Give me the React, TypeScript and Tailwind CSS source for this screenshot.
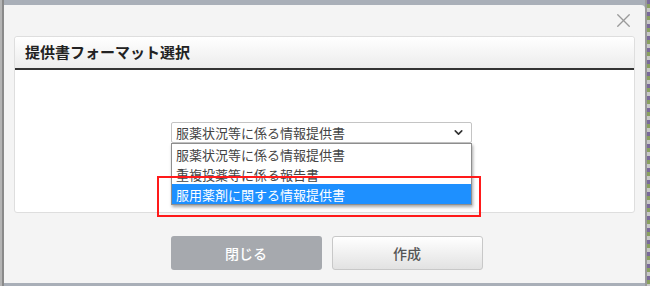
import { ChevronDown, X } from 'lucide-react';

const font = { fontFamily: '"Noto Sans CJK JP", "Noto Sans", sans-serif' };

const options = ['服薬状況等に係る情報提供書', '重複投薬等に係る報告書', '服用薬剤に関する情報提供書'];

function FormatSelect() {
  return (
    <div className="relative w-[301px]">
      <div className="h-[21px] flex items-center justify-between pl-[4px] pr-[6px] bg-white border border-[#c4c4c4] rounded-[2px] text-[13px] text-[#444] leading-none">
        <span>{options[0]}</span>
        <ChevronDown size={13} strokeWidth={3} className="text-[#333]" />
      </div>
      {/* open list */}
      <div className="absolute left-0 top-[21px] w-[301px] bg-white border border-[#8e8e8e] shadow-[1px_2px_3px_rgba(0,0,0,0.35)] text-[13px] leading-none z-10">
        {options.map((o, i) => (
          <div
            key={o}
            className={
              i === 2
                ? 'h-[20px] flex items-center pl-[4px] bg-[#1e90ff] text-white'
                : 'h-[20px] flex items-center pl-[4px] text-[#444]'
            }
          >
            {o}
          </div>
        ))}
      </div>
      {/* highlight box */}
      <div className="absolute left-[-14px] top-[54px] w-[324px] h-[41px] border-2 border-[#ff1a1a] z-20" />
    </div>
  );
}

export default function App() {
  return (
    <div className="w-[650px] h-[286px] overflow-hidden flex bg-[#a9afb8]" style={font}>
      <div className="w-[4px] h-full flex">
        <div className="w-[2px] bg-[#b4b4b4]" />
        <div className="w-[2px] bg-[#8a8a8a]" />
      </div>
      <div className="mt-[5px] w-[641px] h-[278px] bg-[#f4f4f4] rounded-tr-[4px] flex flex-col px-[10px]">
        <div className="h-[31px] flex justify-end items-center pr-[0px]">
          <X size={23} strokeWidth={1.4} className="text-[#9a9a9a]" />
        </div>
        <div className="h-[177px] bg-white border border-[#dedede] rounded-[3px] flex flex-col">
          <div className="h-[33px] flex items-center pl-[10px] bg-gradient-to-b from-white to-[#ececec] border-b-2 border-[#333] rounded-t-[3px]">
            <span className="text-[15px] font-bold text-[#222]">提供書フォーマット選択</span>
          </div>
          <div className="flex justify-center pt-[52px] pr-[6px]">
            <FormatSelect />
          </div>
        </div>
        <div className="mt-[23px] flex justify-center gap-[10px] pl-[4px]">
          <button className="w-[151px] h-[34px] rounded-[3px] bg-[#a6a9ae] text-white text-[14px] font-medium">
            閉じる
          </button>
          <button className="w-[151px] h-[34px] rounded-[3px] bg-gradient-to-b from-white to-[#e2e2e2] border border-[#c8c8c8] text-[#555] text-[14px] font-medium">
            作成
          </button>
        </div>
      </div>
      <div className="w-[5px] h-full flex">
        <div className="w-[2px] bg-[#9a9a9a]" />
        <div className="w-[3px] bg-[repeating-linear-gradient(180deg,#7a6a9a_0px,#7a6a9a_4px,#8aa060_4px,#8aa060_8px,#c8c8c8_8px,#c8c8c8_12px)]" />
      </div>
    </div>
  );
}
